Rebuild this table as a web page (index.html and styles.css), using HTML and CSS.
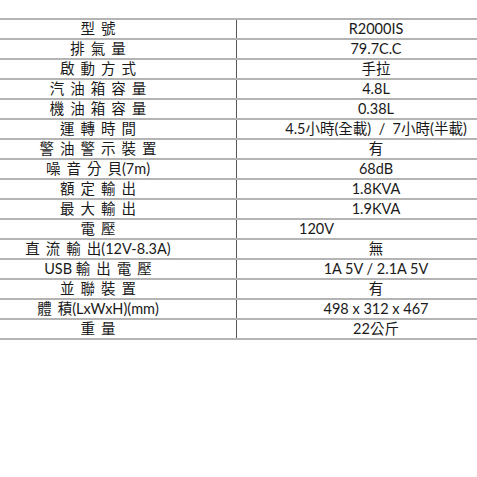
FILE: index.html
```html
<!DOCTYPE html>
<html lang="zh-Hant">
<head>
<meta charset="utf-8">
<title>R2000IS 規格</title>
<link rel="stylesheet" href="styles.css">
</head>
<body>
<div class="frame">
<div class="spec">
  <div class="row"><div class="k"><span class="sp">型</span>號</div><div class="v">R2000IS</div></div>
  <div class="row"><div class="k"><span class="sp">排氣</span>量</div><div class="v">79.7C.C</div></div>
  <div class="row"><div class="k"><span class="sp">啟動方</span>式</div><div class="v">手拉</div></div>
  <div class="row"><div class="k"><span class="sp">汽油箱容</span>量</div><div class="v">4.8L</div></div>
  <div class="row"><div class="k"><span class="sp">機油箱容</span>量</div><div class="v">0.38L</div></div>
  <div class="row"><div class="k"><span class="sp">運轉時</span>間</div><div class="v">4.5小時(全載) &nbsp;/ &nbsp;7小時(半載)</div></div>
  <div class="row"><div class="k"><span class="sp">警油警示裝</span>置</div><div class="v">有</div></div>
  <div class="row"><div class="k"><span class="sp">噪音分</span>貝(7m)</div><div class="v">68dB</div></div>
  <div class="row"><div class="k"><span class="sp">額定輸</span>出</div><div class="v">1.8KVA</div></div>
  <div class="row"><div class="k"><span class="sp">最大輸</span>出</div><div class="v">1.9KVA</div></div>
  <div class="row"><div class="k"><span class="sp">電</span>壓</div><div class="v v-left">120V</div></div>
  <div class="row"><div class="k"><span class="sp">直流輸</span>出(12V-8.3A)</div><div class="v">無</div></div>
  <div class="row"><div class="k">USB&nbsp;<span class="sp">輸出電</span>壓</div><div class="v">1A 5V / 2.1A 5V</div></div>
  <div class="row"><div class="k"><span class="sp">並聯裝</span>置</div><div class="v">有</div></div>
  <div class="row"><div class="k"><span class="sp">體</span>積(LxWxH)(mm)</div><div class="v">498 x 312 x 467</div></div>
  <div class="row last"><div class="k"><span class="sp">重</span>量</div><div class="v">22公斤</div></div>
</div>
</div>
</body>
</html>
```

FILE: styles.css
```css
html, body {
  margin: 0;
  padding: 0;
  background: #ffffff;
}

body {
  font-family: Lato, "Noto Sans CJK TC", sans-serif;
  font-size: 14.5px;
  color: #1a1a1a;
}

.frame {
  width: 477px;
  height: 477px;
  overflow: hidden;
}

.spec {
  margin-top: 18px;
  margin-left: -40px;
  width: 555px;
}

.row {
  display: grid;
  grid-template-columns: 277px 278px;
  height: 20px;
  border-top: 2px solid #b4b4b4;
  box-sizing: border-box;
}

.row.last {
  height: 22px;
  border-bottom: 2px solid #b4b4b4;
}

.k, .v {
  display: flex;
  align-items: center;
  justify-content: center;
  line-height: 18px;
  white-space: nowrap;
}

.k {
  border-right: 1px solid #555555;
}

.sp {
  letter-spacing: 6px;
}

.v-left {
  justify-content: flex-start;
  padding-left: 62px;
}
```
